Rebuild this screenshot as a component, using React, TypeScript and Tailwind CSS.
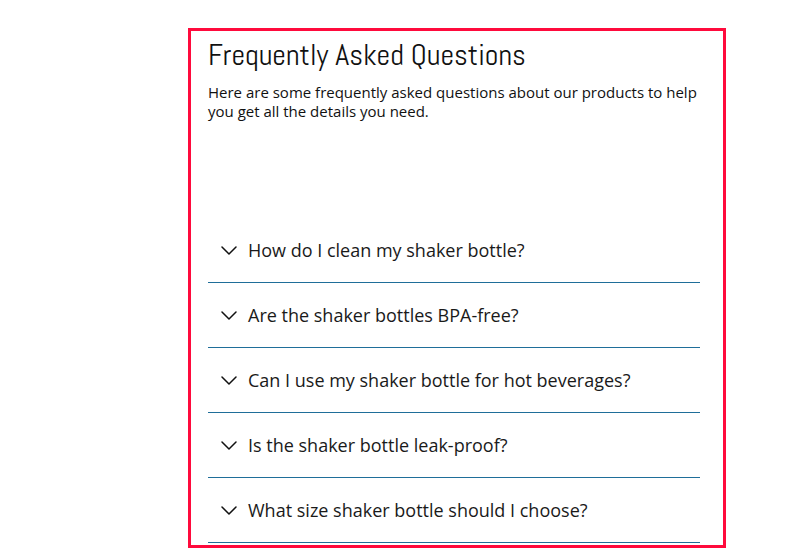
import { useState } from "react";

const faqs = [
  "How do I clean my shaker bottle?",
  "Are the shaker bottles BPA-free?",
  "Can I use my shaker bottle for hot beverages?",
  "Is the shaker bottle leak-proof?",
  "What size shaker bottle should I choose?",
];

function Chevron() {
  return (
    <svg width="16" height="9" viewBox="0 0 16 9" fill="none" className="shrink-0">
      <path d="M1 1l7 7 7-7" stroke="#111" strokeWidth="1.5" strokeLinecap="round" strokeLinejoin="round" />
    </svg>
  );
}

export default function App() {
  const [open, setOpen] = useState<number | null>(null);

  return (
    <div className="min-h-[552px] bg-white pl-[188px] pt-[28px] font-['Open_Sans',sans-serif]">
      <div className="h-[520px] w-[538px] border-[3px] border-[#ff0a3c] pl-[17px] pt-[6px]">
        <h2 className="font-['Abel','Liberation_Sans_Narrow','DejaVu_Sans_Condensed',sans-serif] text-[30px] leading-[36px] font-light text-[#111]">
          Frequently Asked Questions
        </h2>
        <p className="mt-[10px] w-[492px] text-[15px] leading-[19px] text-[#111]">
          Here are some frequently asked questions about our products to help you get all the details you need.
        </p>
        <div className="mt-[97px] w-[492px]">
          {faqs.map((q, i) => (
            <button
              key={q}
              onClick={() => setOpen(open === i ? null : i)}
              className="flex h-[65px] w-full items-center gap-[11px] border-b border-[#1f6e99] pl-[13px] text-left text-[18px] text-[#1a1a1a]"
            >
              <Chevron />
              <span>{q}</span>
            </button>
          ))}
        </div>
      </div>
    </div>
  );
}
